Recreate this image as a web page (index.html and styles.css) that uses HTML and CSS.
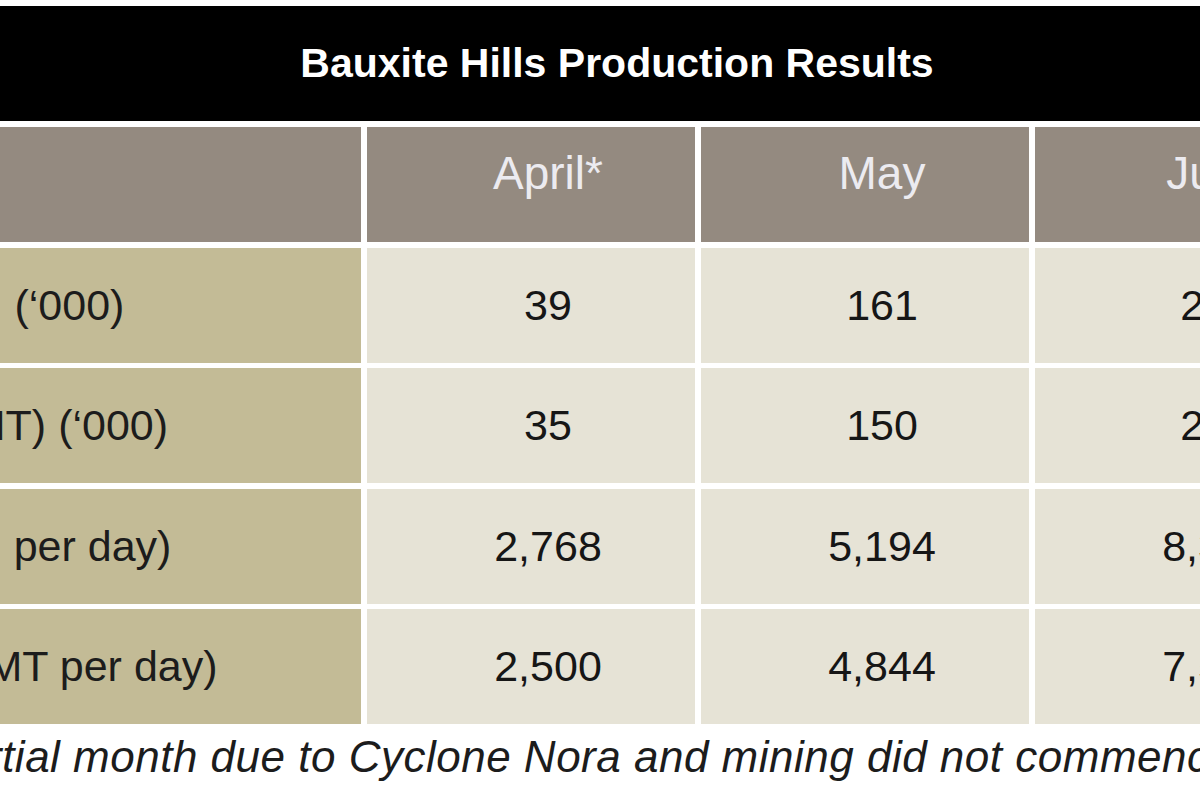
FILE: index.html
```html
<!DOCTYPE html>
<html lang="en">
<head>
<meta charset="utf-8">
<title>Bauxite Hills Production Results</title>
<link rel="stylesheet" href="styles.css">
</head>
<body>
  <div class="sheet">
    <div class="title">Bauxite Hills Production Results</div>
    <div class="grid">
      <div class="cell hd"></div>
      <div class="cell hd num">April*</div>
      <div class="cell hd num">May</div>
      <div class="cell hd num">June</div>

      <div class="cell lbl">Total Tonnes&nbsp;&nbsp; (‘000)</div>
      <div class="cell val num">39</div>
      <div class="cell val num">161</div>
      <div class="cell val num">250</div>

      <div class="cell lbl">Total Ore (DMT) (‘000)</div>
      <div class="cell val num">35</div>
      <div class="cell val num">150</div>
      <div class="cell val num">227</div>

      <div class="cell lbl">(Wet Tonnes&nbsp;&nbsp; per day)</div>
      <div class="cell val num">2,768</div>
      <div class="cell val num">5,194</div>
      <div class="cell val num">8,345</div>

      <div class="cell lbl">Haul Rate (DMT per day)</div>
      <div class="cell val num">2,500</div>
      <div class="cell val num">4,844</div>
      <div class="cell val num">7,569</div>
    </div>
    <p class="note">*April was a partial month due to Cyclone Nora and mining did not commence until 10 April</p>
  </div>
</body>
</html>
```
FILE: styles.css
```css
html, body {
  margin: 0;
  padding: 0;
  overflow: hidden;
  background: #ffffff;
}

body {
  font-family: "Liberation Sans", Arial, sans-serif;
  color: #1c1c1c;
}

.sheet {
  margin-left: -286px;
  width: 1649px;
  padding-top: 6px;
}

.title {
  height: 115px;
  background: #000000;
  color: #ffffff;
  font-weight: bold;
  font-size: 41px;
  display: flex;
  align-items: center;
  justify-content: center;
  padding-left: 157px;
  box-sizing: border-box;
  white-space: nowrap;
}

.grid {
  margin-top: 6px;
  display: grid;
  grid-template-columns: 647px repeat(3, 328px);
  grid-auto-rows: 115px;
  column-gap: 6px;
  row-gap: 5.5px;
}

.cell {
  display: flex;
  align-items: center;
  white-space: nowrap;
  box-sizing: border-box;
}

.num {
  justify-content: center;
  padding-left: 34px;
}

.hd {
  background: #948a80;
  color: #ecebf0;
  font-size: 46px;
  padding-bottom: 23px;
}

.lbl {
  background: #c3bb96;
  font-size: 43px;
  padding-left: 24px;
  color: #1c1c1c;
}

.val {
  background: #e6e3d6;
  font-size: 43px;
  color: #161616;
}

.note {
  margin: 7px 0 0 -28px;
  font-style: italic;
  font-size: 44px;
  letter-spacing: 0.5px;
  line-height: 52px;
  white-space: nowrap;
  color: #1c1c1c;
}
```
